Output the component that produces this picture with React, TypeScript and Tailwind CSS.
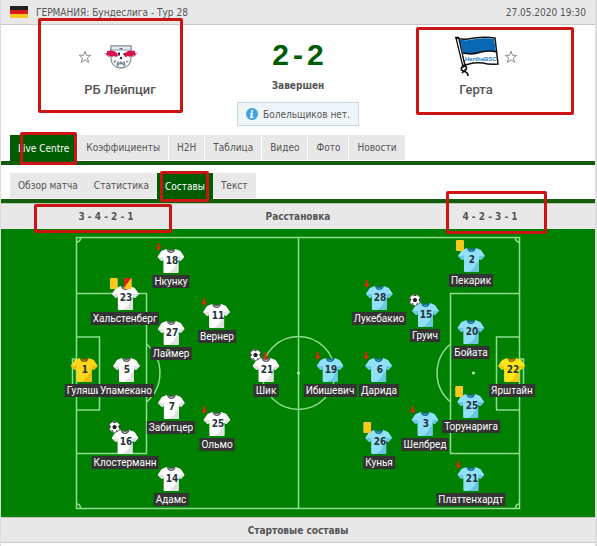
type Side = "home" | "away" | "homeKeeper" | "awayKeeper";
type Mark = "yellow" | "second" | "goal" | "off" | "goalOff";
type Player = { n: number; name: string; x: number; y: number; side: Side; marks?: Mark[] };

const PITCH_W = 594;
const PITCH_H = 288;

const players: Player[] = [
  { n: 1, name: "Гуляши", x: 83, y: 128, side: "homeKeeper" },
  { n: 5, name: "Упамекано", x: 125, y: 128, side: "home" },
  { n: 23, name: "Хальстенберг", x: 124, y: 56, side: "home", marks: ["yellow", "second"] },
  { n: 16, name: "Клостерманн", x: 124, y: 200, side: "home", marks: ["goal"] },
  { n: 18, name: "Нкунку", x: 170, y: 19, side: "home", marks: ["off"] },
  { n: 27, name: "Лаймер", x: 170, y: 91, side: "home" },
  { n: 7, name: "Забитцер", x: 170, y: 165, side: "home" },
  { n: 14, name: "Адамс", x: 170, y: 237, side: "home" },
  { n: 11, name: "Вернер", x: 216, y: 74, side: "home", marks: ["off"] },
  { n: 25, name: "Ольмо", x: 216, y: 182, side: "home", marks: ["off"] },
  { n: 21, name: "Шик", x: 265, y: 128, side: "home", marks: ["goal", "goalOff"] },
  { n: 19, name: "Ибишевич", x: 329, y: 128, side: "away", marks: ["off"] },
  { n: 6, name: "Дарида", x: 378, y: 128, side: "away", marks: ["off"] },
  { n: 28, name: "Лукебакио", x: 378, y: 56, side: "away", marks: ["off"] },
  { n: 26, name: "Кунья", x: 378, y: 200, side: "away", marks: ["yellow"] },
  { n: 15, name: "Груич", x: 424, y: 73, side: "away", marks: ["goal"] },
  { n: 3, name: "Шелбред", x: 424, y: 182, side: "away", marks: ["off"] },
  { n: 2, name: "Пекарик", x: 470, y: 18, side: "away", marks: ["yellow"] },
  { n: 20, name: "Бойата", x: 470, y: 90, side: "away" },
  { n: 25, name: "Торунарига", x: 470, y: 164, side: "away", marks: ["yellow"] },
  { n: 21, name: "Платтенхардт", x: 470, y: 237, side: "away", marks: ["off"] },
  { n: 22, name: "Ярштайн", x: 511, y: 128, side: "awayKeeper" },
];

const shirtColors: Record<Side, [string, string, string]> = {
  home: ["#ffffff", "#dfe3df", "#5c5c60"],
  away: ["#8fe0f8", "#6cc6e2", "#146684"],
  homeKeeper: ["#ffd71a", "#efbd10", "#6b5600"],
  awayKeeper: ["#ffe41a", "#f2c80c", "#8a6500"],
};

function Shirt({ side }: { side: Side }) {
  const [body, shade, collar] = shirtColors[side];
  return (
    <svg viewBox="0 0 27 26" className="block h-[26px] w-[27px]">
      <path d="M9 1 4 3 0 9l4 4 2-1v12q0 1 1 1h13q1 0 1-1V12l2 1 4-4-4-6-5-2q-4 3-9 0Z" fill={body} />
      <path d="m0 9 4 4 2-1V9ZM27 9l-4 4-2-1V9ZM18 17l3-3v10q0 1-1 1H10q6-2 8-8Z" fill={shade} />
      <path d="M9 1q4.500 1.500 9 0-1 4-4.500 4T9 1Z" fill={collar} />
      <path d="M10.500 2.300q3 1.500 6 0-1 1.400-3 1.400t-3-1.400Z" fill={shade} />
    </svg>
  );
}

function Ball() {
  return (
    <svg viewBox="0 0 12 12" className="block h-3 w-3">
      <circle cx="6" cy="6" r="5.500" fill="#fff" stroke="#555" strokeWidth=".6" />
      <path d="m6 3.700 2.300 1.600-.9 2.700H4.600l-.9-2.700ZM4 .9h4L6 2.200ZM.7 4.200 2.300 5 1.600 7.500.6 7ZM11.300 4.200 9.700 5l.7 2.500 1-.5ZM3 10.500l.3-1.800 1.900 1.900ZM9 10.500l-.3-1.800-1.900 1.900Z" fill="#222" />
    </svg>
  );
}

function MarkIcon({ mark }: { mark: Mark }) {
  if (mark === "goal") return <Ball />;
  if (mark === "yellow" || mark === "second")
    return (
      <svg viewBox="0 0 8 11" className="mx-[2px] block h-[11px] w-2">
        <rect width="8" height="11" rx="1" fill="#f8c91c" />
        {mark === "second" && <path d="M1 0h6.500L0 10V1q0-1 1-1Z" fill="#dc2414" />}
      </svg>
    );
  return (
    <svg viewBox="0 0 8 10" className="block h-[10px] w-2">
      <path d="M3 1h2v4h2L4 9 1 5h2Z" fill="#d42a12" />
    </svg>
  );
}

function markPosition(mark: Mark) {
  if (mark === "goal") return "absolute -left-[3px] -top-2";
  if (mark === "yellow") return "absolute -left-1 -top-[7px]";
  if (mark === "second") return "absolute left-[10px] -top-[7px]";
  if (mark === "goalOff") return "absolute left-[9px] -top-[6px]";
  return "absolute -left-[3px] -top-[6px]";
}

function PlayerMarker({ p }: { p: Player }) {
  return (
    <li
      className="absolute flex -translate-x-1/2 flex-col items-center"
      style={{ left: `${(p.x / PITCH_W) * 100}%`, top: `${(p.y / PITCH_H) * 100}%` }}
    >
      <div className="relative">
        <Shirt side={p.side} />
        <span className="absolute inset-x-0 top-[6px] pl-[2px] text-center font-['DejaVu_Sans_Condensed','DejaVu_Sans',sans-serif] text-[10px] leading-[14px] font-bold text-[#263238]">{p.n}</span>
        {p.marks?.map((m) => (
          <span key={m} className={markPosition(m)}>
            <MarkIcon mark={m} />
          </span>
        ))}
      </div>
      <span className="mt-px h-[13px] bg-[#333333] px-[2px] font-['Roboto','Noto_Sans',sans-serif] text-[10px] leading-[13px] whitespace-nowrap text-white">{p.name}</span>
    </li>
  );
}

function Pitch() {
  return (
    <div className="relative aspect-[594/288] bg-[#008000]">
      <svg viewBox="0 0 594 288" className="absolute inset-0 h-full w-full" fill="none" stroke="#8fdd8f" strokeWidth="1.500">
        <path d="M75.500 8.500h443v271h-443ZM297.500 8.500v271M75.500 64.500h70v160h-70M75.500 108h23v73h-23M75.500 130h-4v28h4M518.500 64.500h-69v160h69M518.500 108h-23v73h23M518.500 130h4v28h-4" />
        <circle cx="297.500" cy="144" r="36.500" />
        <path d="M145.500 115a38 38 0 0 1 0 58M449.500 115a38 38 0 0 0 0 58M75.500 13q4 0 4-4.500M518.500 13q-4 0-4-4.500M75.500 275q4 0 4 4.500M518.500 275q-4 0-4 4.500" />
        <g fill="#b8f0b8" stroke="none">
          <circle cx="297.500" cy="144" r="1.500" />
          <circle cx="121" cy="144" r="1.500" />
          <circle cx="472.500" cy="144" r="1.500" />
        </g>
      </svg>
      <ul>
        {players.map((p) => (
          <PlayerMarker key={p.name} p={p} />
        ))}
      </ul>
    </div>
  );
}

function Star({ team }: { team: string }) {
  return (
    <button type="button" aria-label={team} className="block">
      <svg viewBox="0 0 14 14" className="block h-[14px] w-[14px]" fill="none" stroke="#8c8c8c">
        <path d="m7 1.200 1.500 4.100h4.300L9.400 8l1.200 4.500L7 9.900l-3.600 2.600L4.600 8 1.200 5.300h4.300Z" />
      </svg>
    </button>
  );
}

function LeipzigLogo() {
  return (
    <svg viewBox="0 0 34 24" className="block h-6 w-[34px]">
      <path d="M7 1h20v12q0 9-10 10Q7 22 7 13Z" fill="#fff" stroke="#8492a2" strokeWidth="1.300" />
      <path d="M7 1h20v4H7Z" fill="#e9edf2" stroke="#8492a2" />
      <path d="m15 3 2 2 2-2Z" fill="#5f6e80" />
      <path d="m0 9 3-1 0-2q4-1 7 0l3 2 1 3-2 1-2-1-2 1-1-1-3 1 1-2-2 1-1-2Z" fill="#d8124a" />
      <path d="m34 9-3-1 0-2q-4-1-7 0l-3 2-1 3 2 1 2-1 2 1 1-1 3 1-1-2 2 1 1-2Z" fill="#d8124a" />
      <path d="M14 7.500h2v3h-2ZM19.500 8h1.500v2h-1.500Z" fill="#3c2440" />
      <circle cx="17" cy="13" r="1.300" fill="#243a58" />
      <path d="m9.500 16 2 0-1 2m2.500 2 1-3 2 2 1-2 1 2 2-2 1 3m1-3 2.500-1M13 21l2-1.500m4 0 2 1.500" fill="none" stroke="#6e7f91" strokeWidth="1.200" />
    </svg>
  );
}

function HerthaLogo() {
  return (
    <svg viewBox="0 0 46 42" className="block h-[42px] w-[46px]">
      <path d="M3 2q6 2 11 1 14-3 27-1l3 26q-8 1-15-1-8-1-14 1l-4 1Z" fill="#fff" stroke="#111" strokeWidth="1.500" />
      <path d="M5 3q5 2 10 1 14-3 25-1l2 13q-8-2-16 0-9 3-17 1Z" fill="#0868b4" />
      <path d="m2 2 3 1 6 27-2 1Z" fill="#fff" stroke="#111" strokeWidth="1.300" />
      <path d="M1 1.500h4M9 17q9 2 18-1 9-2 16 0M10 29q-5 4-1 6 5 1 5 5m-4-11q5 3 0 6l-2 2" fill="none" stroke="#111" strokeWidth="1.700" />
      <text x="11" y="25" fontFamily="Liberation Sans, sans-serif" fontSize="6" fontWeight="700" fill="#1680c4">HerthaBSC</text>
    </svg>
  );
}

const mainTabs = ["Live Centre", "Коэффициенты", "H2H", "Таблица", "Видео", "Фото", "Новости"];
const subTabs = ["Обзор матча", "Статистика", "Составы", "Текст"];

function Tabs({ items, active, gap }: { items: string[]; active: string; gap: string }) {
  return (
    <nav className={`flex border-b-4 border-[#125c0b] pl-[9px] ${gap}`}>
      {items.map((t) => (
        <button
          key={t}
          type="button"
          className={
            t === active
              ? "h-[26px] bg-[#005c00] px-2 whitespace-nowrap text-white"
              : "h-[25px] bg-[#e8e8e8] px-2 whitespace-nowrap text-[#555555]"
          }
        >
          {t}
        </button>
      ))}
    </nav>
  );
}

const highlights = [
  "left-[38px] top-[18px] h-[95px] w-[145px]",
  "left-[416px] top-[27px] h-[88px] w-[158px]",
  "left-[20px] top-[132px] h-[33px] w-[57px]",
  "left-[160px] top-[171px] h-[31px] w-[49px]",
  "left-[34px] top-[204px] h-[29px] w-[138px]",
  "left-[446px] top-[191px] h-[43px] w-[101px]",
];

export default function App() {
  return (
    <main className="relative min-h-screen border-r-2 border-l border-[#dddddd] bg-white font-['DejaVu_Sans_Condensed','DejaVu_Sans',sans-serif] text-[10px] text-[#555555]">
      <header className="flex h-[25px] items-center justify-between border-b border-[#c8c8c8] bg-[#e8e8e8] px-[9px]">
        <div className="flex items-center gap-2">
          <svg viewBox="0 0 18 12" className="block h-3 w-[18px]">
            <path d="M0 0h18v4H0Z" fill="#222" />
            <path d="M0 4h18v4H0Z" fill="#d91a1a" />
            <path d="M0 8h18v4H0Z" fill="#f7c51e" />
          </svg>
          <span>ГЕРМАНИЯ: Бундеслига - Тур 28</span>
        </div>
        <time>27.05.2020 19:30</time>
      </header>

      <section className="grid h-[110px] grid-cols-3 px-[30px]">
        <div className="flex flex-col items-center pt-[10px]">
          <div className="flex h-[44px] items-center gap-3 pr-6">
            <Star team="РБ Лейпциг" />
            <LeipzigLogo />
          </div>
          <h2 className="mt-[3px] font-['Roboto',sans-serif] text-[13px] leading-[16px] font-medium">РБ Лейпциг</h2>
        </div>
        <div className="flex flex-col items-center pt-[14px]">
          <div className="flex gap-1 font-['Liberation_Sans',sans-serif] text-[30px] leading-[32px] font-bold text-[#005c00]">
            <span>2</span>
            <span>-</span>
            <span>2</span>
          </div>
          <p className="mt-2 leading-[14px] font-bold">Завершен</p>
          <p className="mt-[9px] flex h-6 items-center gap-[5px] border border-[#c9d7e0] bg-[#eff6fa] px-2 whitespace-nowrap">
            <svg viewBox="0 0 12 12" className="block h-3 w-3">
              <circle cx="6" cy="6" r="6" fill="#3ba2e4" />
              <path d="M5.500 2h2l-.4 1.700h-2ZM4.500 4.600h2.600L6.300 9H7.500v1H4l.8-4.300h-.6Z" fill="#fff" />
            </svg>
            Болельщиков нет.
          </p>
        </div>
        <div className="flex flex-col items-center pt-[10px]">
          <div className="flex h-[44px] items-center gap-1 pl-5">
            <HerthaLogo />
            <Star team="Герта" />
          </div>
          <h2 className="mt-[3px] font-['Roboto',sans-serif] text-[13px] leading-[16px] font-medium">Герта</h2>
        </div>
      </section>

      <Tabs items={mainTabs} active="Live Centre" gap="gap-px" />
      <div className="pt-2">
        <Tabs items={subTabs} active="Составы" gap="gap-0" />
      </div>

      <section>
        <div className="grid h-[26px] grid-cols-3 items-center border-t border-[#b5cfae] bg-[#e8e8e8] px-[9px] text-center font-bold">
          <span>3 - 4 - 2 - 1</span>
          <h3>Расстановка</h3>
          <span>4 - 2 - 3 - 1</span>
        </div>
        <Pitch />
        <h3 className="flex h-[26px] items-center justify-center border-y border-[#c8c8c8] bg-[#e8e8e8] font-bold">Стартовые составы</h3>
      </section>

      {highlights.map((c) => (
        <div key={c} className={`pointer-events-none absolute -ml-px rounded-xs border-3 border-[#cc1414] ${c}`} />
      ))}
    </main>
  );
}
